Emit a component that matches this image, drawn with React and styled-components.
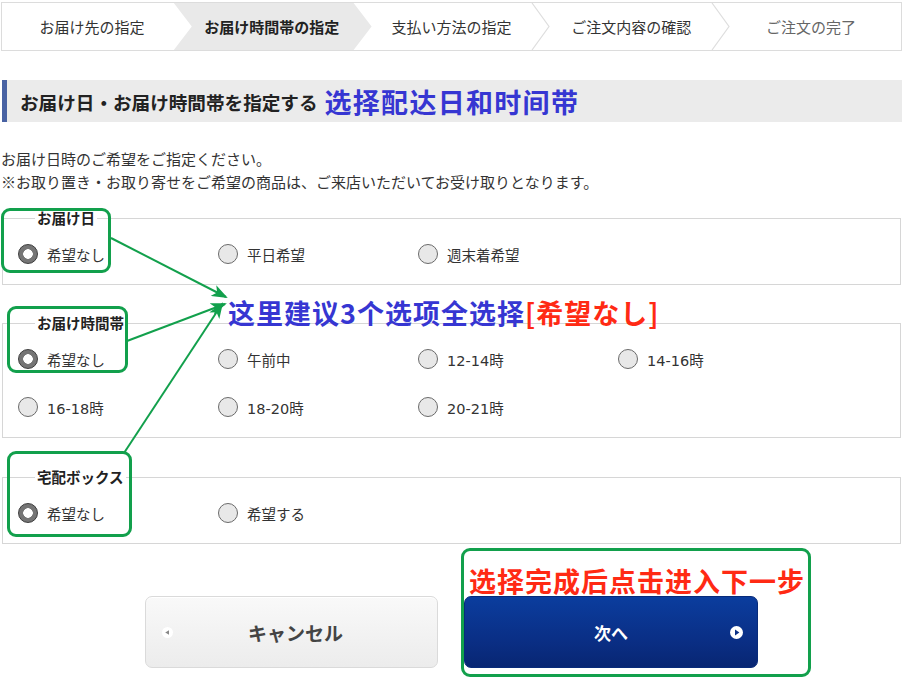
import React from "react";
import styled, { createGlobalStyle } from "styled-components";

const GlobalStyle = createGlobalStyle`
  html, body { margin: 0; padding: 0; background: #fff; }
  body {
    font-family: "Noto Sans CJK JP", "Noto Sans", sans-serif;
    color: #333;
  }
`;

const Page = styled.div`
  position: relative;
  width: 903px;
  height: 689px;
  padding: 0 1px;
  box-sizing: border-box;
  overflow: hidden;
`;

const StepBar = styled.ol`
  list-style: none;
  margin: 2px 0 0;
  padding: 0;
  height: 49px;
  box-sizing: border-box;
  border: 1px solid #dcdcdc;
  display: flex;
`;

const Step = styled.li`
  position: relative;
  isolation: isolate;
  flex: 1;
  display: flex;
  align-items: center;
  justify-content: center;
  font-size: 15px;
  font-weight: ${(p) => (p.$active ? 700 : 400)};
  color: ${(p) => (p.$active ? "#222" : p.$done ? "#666" : "#333")};
  &::before {
    content: "";
    display: ${(p) => (p.$active ? "block" : "none")};
    position: absolute;
    top: 0;
    bottom: 0;
    left: -8px;
    right: -10px;
    background: #e9e9e9;
    z-index: -1;
    clip-path: polygon(0 0, calc(100% - 18px) 0, 100% 50%, calc(100% - 18px) 100%, 0 100%, 18px 50%);
  }
`;

const ChevronSvg = styled.svg`
  position: absolute;
  top: 0;
  right: -10px;
  width: 20px;
  height: 100%;
`;

const Chevron = () => (
  <ChevronSvg viewBox="0 0 20 47" preserveAspectRatio="none">
    <polyline points="1,0 18,23.5 1,47" fill="none" stroke="#dedede" strokeWidth="1.2" />
  </ChevronSvg>
);

const Heading = styled.h2`
  margin: 29px 0 0 1px;
  height: 42px;
  box-sizing: border-box;
  background: #ebebeb;
  border-left: 5px solid #4862a3;
  padding-left: 13px;
  display: flex;
  align-items: center;
  gap: 7px;
  font-size: 18.6px;
  font-weight: 700;
  color: #222;
`;

const HeadingNote = styled.span`
  font-family: "Noto Sans CJK SC", sans-serif;
  font-size: 27px;
  font-weight: 700;
  letter-spacing: 1.3px;
  color: #3636d2;
  line-height: 1;
`;

const Description = styled.p`
  margin: 25px 0 0;
  font-size: 15px;
  line-height: 23px;
  color: #333;
`;

const Fieldset = styled.fieldset`
  margin: ${(p) => p.$gap}px 1px 0 1px;
  padding: 3px 0 6px 15px;
  border: 1px solid #d6d6d6;
  min-inline-size: 0;
`;

const Legend = styled.legend`
  margin-left: 17px;
  padding: 0 2px;
  font-size: 14.5px;
  line-height: 18px;
  font-weight: 700;
  color: #222;
`;

const OptionGrid = styled.div`
  display: grid;
  grid-template-columns: repeat(4, 200px);
  grid-auto-rows: 48px;
  align-items: center;
`;

const Option = styled.label`
  display: flex;
  align-items: center;
  gap: 9px;
  font-family: "DejaVu Sans", "Noto Sans CJK JP", sans-serif;
  font-size: 14.5px;
  color: #333;
`;

const RadioMark = styled.span`
  width: 20px;
  height: 20px;
  box-sizing: border-box;
  border-radius: 50%;
  border: 1px solid ${(p) => (p.$checked ? "#3c3c3c" : "#6a6a6a")};
  background: ${(p) =>
    p.$checked
      ? "radial-gradient(circle, #fff 0 4.5px, #757575 5px)"
      : "#e8e8e8"};
  flex: none;
`;

const ButtonRow = styled.div`
  margin-top: 52px;
  display: flex;
  justify-content: center;
  gap: 26px;
`;

const Button = styled.button`
  width: ${(p) => (p.$primary ? 294 : 293)}px;
  height: 72px;
  border-radius: 7px;
  display: grid;
  grid-template-columns: 14px 1fr 14px;
  align-items: center;
  padding: 0 14px;
  box-sizing: border-box;
  font-family: "Noto Sans CJK JP", sans-serif;
  font-weight: 700;
  font-size: ${(p) => (p.$primary ? 17 : 19)}px;
  color: ${(p) => (p.$primary ? "#fff" : "#444")};
  border: 1px solid ${(p) => (p.$primary ? "#082b7a" : "#dadada")};
  background: ${(p) =>
    p.$primary
      ? "linear-gradient(#0b3d9e, #0a2f86 60%, #082673)"
      : "linear-gradient(#f9f9f9, #ececec)"};
  box-shadow: ${(p) => (p.$primary ? "none" : "inset 0 1px 0 #fff")};
`;

const ButtonLabel = styled.span`
  grid-column: 2;
  text-align: center;
  padding-left: ${(p) => (p.$shift ? 8 : 0)}px;
`;

const IconSlot = styled.span`
  grid-column: ${(p) => p.$col};
  grid-row: 1;
  display: flex;
  justify-content: center;
`;

const GreenBox = styled.div`
  position: absolute;
  border: 3px solid #12a04c;
  border-radius: 9px;
  box-sizing: border-box;
  pointer-events: none;
`;

const Overlay = styled.svg`
  position: absolute;
  left: 0;
  top: 0;
  width: 903px;
  height: 689px;
  pointer-events: none;
`;

const NoteLine = styled.div`
  position: absolute;
  font-family: "Noto Sans CJK SC", sans-serif;
  font-weight: 700;
  font-size: 27px;
  line-height: 1;
  letter-spacing: 1px;
  white-space: nowrap;
  color: ${(p) => p.$color};
`;

const Red = styled.span`
  color: #ff2a14;
`;

const steps = ["お届け先の指定", "お届け時間帯の指定", "支払い方法の指定", "ご注文内容の確認", "ご注文の完了"];
const activeStep = 1;

const groups = [
  { legend: "お届け日", gap: 16, options: ["希望なし", "平日希望", "週末着希望"] },
  {
    legend: "お届け時間帯",
    gap: 29,
    options: ["希望なし", "午前中", "12-14時", "14-16時", "16-18時", "18-20時", "20-21時"],
  },
  { legend: "宅配ボックス", gap: 30, options: ["希望なし", "希望する"] },
];

export default function App() {
  return (
    <>
      <GlobalStyle />
      <Page>
        <StepBar>
          {steps.map((s, i) => (
            <Step key={s} $active={i === activeStep} $done={i === steps.length - 1}>
              {s}
              {i < steps.length - 1 && i !== activeStep && i + 1 !== activeStep && <Chevron />}
            </Step>
          ))}
        </StepBar>

        <Heading>
          お届け日・お届け時間帯を指定する
          <HeadingNote>选择配达日和时间带</HeadingNote>
        </Heading>

        <Description>
          お届け日時のご希望をご指定ください。
          <br />
          ※お取り置き・お取り寄せをご希望の商品は、ご来店いただいてお受け取りとなります。
        </Description>

        {groups.map((g) => (
          <Fieldset key={g.legend} $gap={g.gap}>
            <Legend>{g.legend}</Legend>
            <OptionGrid>
              {g.options.map((o, i) => (
                <Option key={o}>
                  <RadioMark $checked={i === 0} />
                  {o}
                </Option>
              ))}
            </OptionGrid>
          </Fieldset>
        ))}

        <ButtonRow>
          <Button>
            <IconSlot $col={1}>
              <svg width="11" height="11" viewBox="0 0 11 11">
                <circle cx="5.5" cy="5.5" r="5.5" fill="#fff" />
                <path d="M3.2 5.5 L7 3.2 L7 7.8 Z" fill="#888" />
              </svg>
            </IconSlot>
            <ButtonLabel $shift>キャンセル</ButtonLabel>
          </Button>
          <Button $primary>
            <ButtonLabel>次へ</ButtonLabel>
            <IconSlot $col={3}>
              <svg width="13" height="13" viewBox="0 0 13 13">
                <circle cx="6.5" cy="6.5" r="6.5" fill="#fff" />
                <path d="M5 3.6 L9.4 6.5 L5 9.4 Z" fill="#0a2f86" />
              </svg>
            </IconSlot>
          </Button>
        </ButtonRow>

        <GreenBox style={{ left: 1, top: 208, width: 110, height: 65 }} />
        <GreenBox style={{ left: 7, top: 306, width: 121, height: 67 }} />
        <GreenBox style={{ left: 7, top: 451, width: 125, height: 86 }} />
        <GreenBox style={{ left: 461, top: 548, width: 350, height: 129 }} />

        <Overlay viewBox="0 0 903 689">
          <defs>
            <marker id="ah" markerWidth="16" markerHeight="12" refX="14" refY="6" orient="auto" markerUnits="userSpaceOnUse">
              <path d="M0,0 L16,6 L0,12 L4,6 Z" fill="#12a04c" />
            </marker>
          </defs>
          <g stroke="#12a04c" strokeWidth="2" fill="none">
            <line x1="111" y1="238" x2="226" y2="297" markerEnd="url(#ah)" />
            <line x1="127" y1="341" x2="225" y2="304" markerEnd="url(#ah)" />
            <line x1="124" y1="453" x2="222" y2="304" markerEnd="url(#ah)" />
          </g>
        </Overlay>

        <NoteLine $color="#3636d2" style={{ left: 228, top: 299 }}>
          这里建议3个选项全选择<Red>[希望なし]</Red>
        </NoteLine>
        <NoteLine $color="#ff2a14" style={{ left: 469, top: 567 }}>
          选择完成后点击进入下一步
        </NoteLine>
      </Page>
    </>
  );
}
